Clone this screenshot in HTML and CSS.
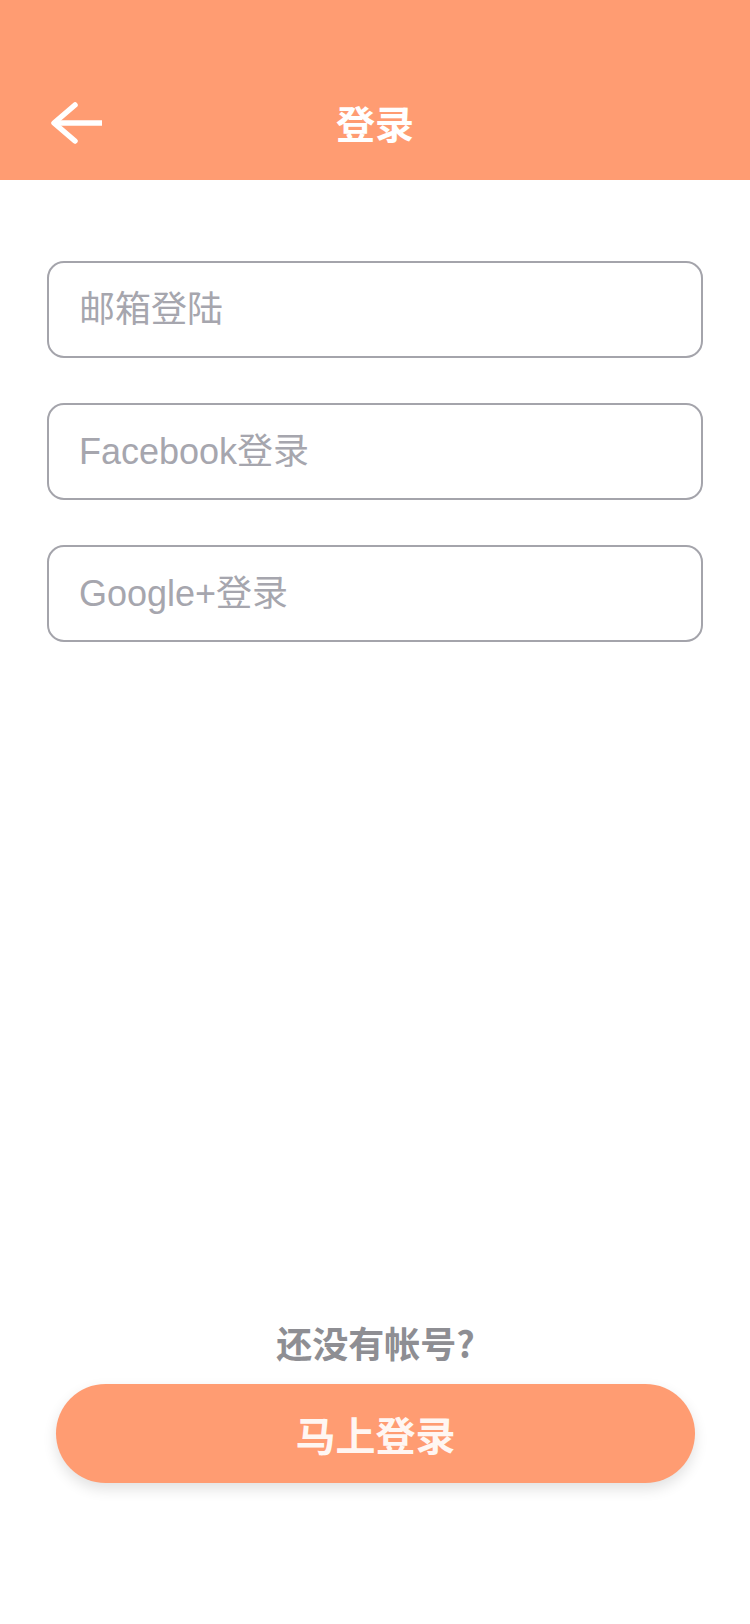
FILE: index.html
```html
<!DOCTYPE html>
<html lang="zh-CN">
<head>
<meta charset="utf-8">
<title>登录</title>
<link rel="stylesheet" href="styles.css">
</head>
<body>
<div class="page">
  <header class="header">
    <div class="nav">
      <div class="nav-left">
        <svg class="back" width="60" height="50" viewBox="0 0 60 50" aria-hidden="true">
          <path d="M9 25 H57" fill="none" stroke="#fff" stroke-width="5.5" stroke-linecap="butt"/>
          <path d="M30 7 L9 25 L30 43" fill="none" stroke="#fff" stroke-width="5.5" stroke-linecap="round" stroke-linejoin="round"/>
        </svg>
      </div>
      <h1 class="title">登录</h1>
      <div class="nav-right"></div>
    </div>
  </header>

  <main class="form">
    <input class="field" type="text" placeholder="邮箱登陆">
    <input class="field" type="text" placeholder="Facebook登录">
    <input class="field" type="text" placeholder="Google+登录">
  </main>

  <div class="spacer"></div>

  <footer class="footer">
    <p class="hint">还没有帐号?</p>
    <button class="cta" type="button">马上登录</button>
  </footer>
</div>
</body>
</html>
```

FILE: styles.css
```css
* { box-sizing: border-box; }

html, body {
  margin: 0;
  padding: 0;
  background: #ffffff;
}

body {
  font-family: "Liberation Sans", "Noto Sans CJK SC", sans-serif;
}

.page {
  min-height: 1624px;
  display: flex;
  flex-direction: column;
}

.header {
  height: 180px;
  background: #ff9c72;
  padding-top: 78px;
}

.nav {
  height: 92px;
  display: grid;
  grid-template-columns: 1fr auto 1fr;
  align-items: center;
}

.nav-left {
  display: flex;
  align-items: center;
}

.back {
  display: block;
  margin-left: 45px;
  margin-top: -2px;
}

.title {
  margin: 0;
  color: #ffffff;
  font-family: "Noto Sans CJK SC", sans-serif;
  font-size: 39px;
  font-weight: 700;
  line-height: 1;
  margin-top: -3px;
}

.form {
  padding: 81px 47px 0;
  display: flex;
  flex-direction: column;
  gap: 45px;
}

.field {
  display: block;
  width: 100%;
  height: 97px;
  border: 2px solid #a4a4ab;
  border-radius: 17px;
  padding: 0 30px;
  margin: 0;
  background: #ffffff;
  font-family: "Liberation Sans", "Noto Sans CJK SC", sans-serif;
  font-size: 36px;
  color: #333333;
  outline: none;
}

.field::placeholder {
  color: #a6a6ae;
  opacity: 1;
}

.spacer {
  flex: 1;
}

.footer {
  display: flex;
  flex-direction: column;
  align-items: stretch;
  padding: 0 55px 141px 56px;
}

.hint {
  margin: 0 0 18px;
  text-align: center;
  font-family: "Noto Sans CJK SC", sans-serif;
  font-size: 36px;
  font-weight: 700;
  line-height: 48px;
  color: #8e8e93;
}

.cta {
  height: 99px;
  border: none;
  border-radius: 50px;
  background: #ff9c72;
  color: #fff6f2;
  font-family: "Noto Sans CJK SC", sans-serif;
  font-size: 40px;
  font-weight: 700;
  box-shadow: 0 6px 14px rgba(0, 0, 0, 0.12);
  padding: 0;
  cursor: pointer;
}
```
